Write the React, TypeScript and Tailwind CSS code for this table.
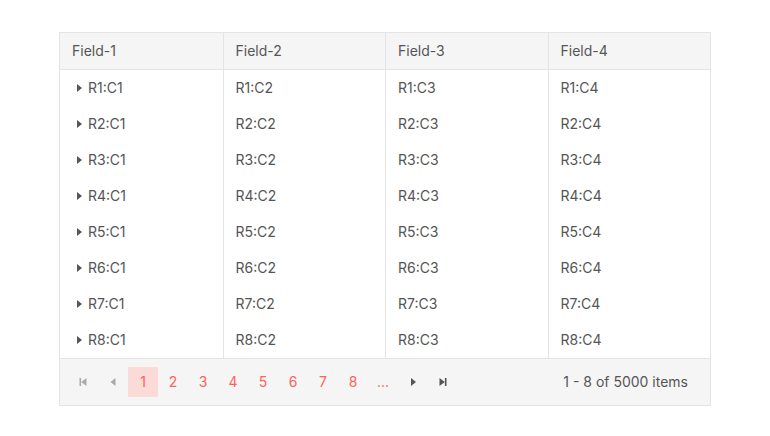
import React from "react";

const font = { fontFamily: "Inter, 'Noto Sans', 'Liberation Sans', sans-serif" };

function Tri({ dir, color = "#666" }: { dir: "right" | "left"; color?: string }) {
  return (
    <svg width="8" height="10" viewBox="0 0 8 10">
      {dir === "right" ? (
        <polygon points="2,1 7,5 2,9" fill={color} />
      ) : (
        <polygon points="6.5,1 1.5,5 6.5,9" fill={color} />
      )}
    </svg>
  );
}

function Edge({ dir, color }: { dir: "first" | "last"; color: string }) {
  return (
    <svg width="10" height="10" viewBox="0 0 10 10">
      {dir === "first" ? (
        <>
          <rect x="1.5" y="1" width="1.6" height="8" fill={color} />
          <polygon points="8.5,1 3.2,5 8.5,9" fill={color} />
        </>
      ) : (
        <>
          <rect x="6.9" y="1" width="1.6" height="8" fill={color} />
          <polygon points="1.5,1 6.8,5 1.5,9" fill={color} />
        </>
      )}
    </svg>
  );
}

export default function App() {
  const rows = [1, 2, 3, 4, 5, 6, 7, 8];
  const cols = [1, 2, 3, 4];
  return (
    <div className="w-[770px] h-[436px] bg-white pt-[32px] pl-[59px]" style={font}>
      <div className="w-[652px] border border-[#e4e4e4] text-[14px] leading-[20px] text-[#555]">
        <div className="grid grid-cols-4 bg-[#f5f5f5] border-b border-[#e4e4e4]">
          {cols.map((c) => (
            <div
              key={c}
              className={`h-[36px] flex items-center px-3 ${c > 1 ? "border-l border-[#e4e4e4]" : ""}`}
            >
              Field-{c}
            </div>
          ))}
        </div>
        <div className="grid grid-cols-4">
          {rows.map((r) =>
            cols.map((c) => (
              <div
                key={`${r}-${c}`}
                className={`h-[36px] flex items-center px-3 ${c > 1 ? "border-l border-[#e4e4e4]" : ""}`}
              >
                {c === 1 && (
                  <span className="ml-[3px] mr-[5px] flex items-center">
                    <Tri dir="right" color="#555" />
                  </span>
                )}
                R{r}:C{c}
              </div>
            ))
          )}
        </div>
        <div className="h-[47px] bg-[#f5f5f5] border-t border-[#e4e4e4] flex items-center pl-[8px] pr-[22px]">
          <div className="flex items-center">
            <div className="w-[30px] h-[30px] flex items-center justify-center">
              <Edge dir="first" color="#aaa" />
            </div>
            <div className="w-[30px] h-[30px] flex items-center justify-center">
              <Tri dir="left" color="#aaa" />
            </div>
            {[1, 2, 3, 4, 5, 6, 7, 8].map((p) => (
              <div
                key={p}
                className={`w-[30px] h-[30px] flex items-center justify-center text-[#ff6358] ${
                  p === 1 ? "bg-[#fbdbd8]" : ""
                }`}
              >
                {p}
              </div>
            ))}
            <div className="w-[30px] h-[30px] flex items-center justify-center text-[#ff6358]">...</div>
            <div className="w-[30px] h-[30px] flex items-center justify-center">
              <Tri dir="right" color="#555" />
            </div>
            <div className="w-[30px] h-[30px] flex items-center justify-center">
              <Edge dir="last" color="#555" />
            </div>
          </div>
          <div className="ml-auto text-[#555]">1 - 8 of 5000 items</div>
        </div>
      </div>
    </div>
  );
}
